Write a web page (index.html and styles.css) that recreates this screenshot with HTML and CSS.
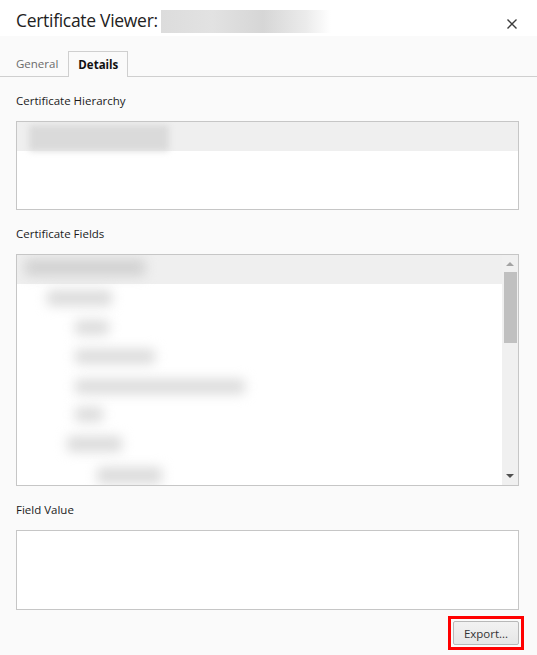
FILE: index.html
```html
<!DOCTYPE html>
<html>
<head>
<meta charset="utf-8">
<link rel="stylesheet" href="styles.css">
</head>
<body>
<div class="dialog">
  <header class="titlebar">
    <span class="title">Certificate Viewer:</span>
    <span class="redact"></span>
    <span class="spacer"></span>
    <button class="close" aria-label="Close">
      <svg width="12" height="12" viewBox="0 0 12 12"><path d="M1.5 1.5 L10.5 10.5 M10.5 1.5 L1.5 10.5" stroke="#3c3c3c" stroke-width="1.4" fill="none"/></svg>
    </button>
  </header>
  <nav class="tabs">
    <span class="tab">General</span>
    <span class="tab active">Details</span>
  </nav>
  <main class="content">
    <div class="label">Certificate Hierarchy</div>
    <div class="box hier">
      <div class="row sel"><span class="blur b-h1"></span></div>
    </div>

    <div class="label">Certificate Fields</div>
    <div class="box fields">
      <div class="list">
        <div class="row sel"><span class="blur b-f0"></span></div>
        <div class="row ind1"><span class="blur b-f1"></span></div>
        <div class="row ind2"><span class="blur b-f2"></span></div>
        <div class="row ind2"><span class="blur b-f3"></span></div>
        <div class="row ind2"><span class="blur b-f4"></span></div>
        <div class="row ind2"><span class="blur b-f5"></span></div>
        <div class="row ind15"><span class="blur b-f6"></span></div>
        <div class="row ind3"><span class="blur b-f7"></span></div>
      </div>
      <div class="scrollbar">
        <span class="arrow up"></span>
        <span class="thumb"></span>
        <span class="track"></span>
        <span class="arrow down"></span>
      </div>
    </div>

    <div class="label">Field Value</div>
    <div class="box value"></div>

    <div class="actions">
      <span class="highlight"><button class="btn">Export...</button></span>
    </div>
  </main>
</div>
</body>
</html>
```

FILE: styles.css
```css
* { box-sizing: border-box; }
html, body { margin: 0; padding: 0; }
body {
  width: 537px;
  height: 655px;
  background: #fafafa;
  font-family: "Open Sans", "Noto Sans", sans-serif;
  color: #222;
  overflow: hidden;
}
.dialog { width: 537px; height: 655px; display: flex; flex-direction: column; }

.titlebar {
  height: 36px;
  background: #ffffff;
  display: flex;
  align-items: center;
  padding: 0 18px 0 16px;
}
.title {
  font-size: 17.5px;
  font-weight: 400;
  color: #222;
  letter-spacing: -0.3px;
  padding-top: 4px;
}
.redact {
  width: 170px;
  height: 23px;
  margin-left: 3px;
  margin-top: 6px;
  background: linear-gradient(90deg, #dcdcdc 0%, #e2e2e2 30%, #d6d6d6 60%, #ebebeb 85%, #ffffff 100%);
}
.spacer { flex: 1; }
.close {
  border: 0;
  background: transparent;
  padding: 0;
  width: 14px;
  height: 14px;
  margin-top: 12px;
  display: flex;
  align-items: center;
  justify-content: center;
}

.tabs {
  margin-top: 15px;
  height: 26px;
  display: flex;
  align-items: flex-end;
  border-bottom: 1px solid #cfcfcf;
  padding-left: 6px;
}
.tab {
  font-size: 11.5px;
  color: #6b6b6b;
  height: 26px;
  line-height: 28px;
  padding: 0 10px;
}
.tab.active {
  color: #111;
  font-weight: 700;
  border: 1px solid #cfcfcf;
  border-bottom: 0;
  background: #fafafa;
  height: 26px;
  margin-bottom: -1px;
  padding: 0 9px;
  line-height: 26px;
}

.content {
  padding: 16px 18px 0 16px;
  display: flex;
  flex-direction: column;
}
.label {
  font-size: 11.5px;
  line-height: 16px;
  height: 16px;
  color: #1a1a1a;
  margin-bottom: 12px;
}
.box {
  border: 1px solid #c6c6c6;
  background: #ffffff;
  margin-bottom: 16px;
  overflow: hidden;
}
.hier { height: 89px; }
.fields { height: 232px; display: flex; }
.value { height: 80px; margin-bottom: 6px; }

.row { height: 29px; position: relative; }
.row.sel { background: #efefef; }
.list { flex: 1; }

.blur {
  position: absolute;
  display: block;
  background: #dcdcdc;
  filter: blur(6px);
  border-radius: 3px;
}
.b-h1 { left: 12px; top: 3px; width: 140px; height: 26px; background: #dadada; filter: blur(3px); }
.b-f0 { left: 8px; top: 4px; width: 120px; height: 17px; background: #d2d2d2; }
.b-f1 { left: 30px; top: 6px; width: 65px; height: 16px; }
.b-f2 { left: 58px; top: 7px; width: 34px; height: 15px; }
.b-f3 { left: 58px; top: 7px; width: 80px; height: 15px; }
.b-f4 { left: 58px; top: 8px; width: 170px; height: 15px; }
.b-f5 { left: 58px; top: 7px; width: 28px; height: 15px; }
.b-f6 { left: 50px; top: 7px; width: 55px; height: 16px; }
.b-f7 { left: 80px; top: 9px; width: 65px; height: 17px; }

.scrollbar {
  width: 16px;
  background: #f0f0f0;
  display: flex;
  flex-direction: column;
  align-items: center;
}
.arrow {
  width: 0; height: 0;
  border-left: 4px solid transparent;
  border-right: 4px solid transparent;
}
.arrow.up { border-bottom: 4px solid #a3a3a3; margin-top: 7px; margin-bottom: 6px; }
.arrow.down { border-top: 4px solid #505050; margin-bottom: 7px; margin-top: 6px; }
.thumb { width: 13px; height: 71px; background: #c0c0c0; }
.track { flex: 1; }

.actions { display: flex; justify-content: flex-end; margin-right: -5px; }
.highlight {
  display: block;
  border: 3px solid #ff0000;
  padding: 2px;
}
.btn {
  display: block;
  font-family: "Open Sans", "Noto Sans", sans-serif;
  font-size: 11.5px;
  color: #333;
  width: 66px;
  height: 24px;
  border: 1px solid #b8b8b8;
  border-radius: 2px;
  background: linear-gradient(#f2f2f2, #e6e6e6);
  padding: 0;
}
```
